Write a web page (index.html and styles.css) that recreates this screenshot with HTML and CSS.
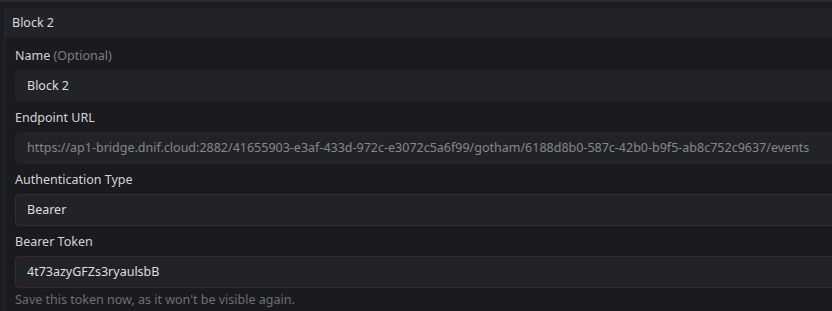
FILE: index.html
```html
<!DOCTYPE html>
<html lang="en">

<head>
    <meta charset="UTF-8">
    <title>Block 2</title>
    <link rel="stylesheet" href="styles.css">
</head>

<body>

    <div class="topstrip"></div>

    <section class="panel">
        <header class="panel-head">Block 2</header>

        <div class="panel-body">
            <div class="field">
                <label>Name <span class="muted">(Optional)</span></label>
                <div class="input">Block 2</div>
            </div>

            <div class="field">
                <label>Endpoint URL</label>
                <div class="input disabled">https://ap1-bridge.dnif.cloud:2882/41655903-e3af-433d-972c-e3072c5a6f99/gotham/6188d8b0-587c-42b0-b9f5-ab8c752c9637/events</div>
            </div>

            <div class="field">
                <label>Authentication Type</label>
                <div class="input outlined">Bearer</div>
            </div>

            <div class="field">
                <label>Bearer Token</label>
                <div class="input outlined">4t73azyGFZs3ryaulsbB</div>
                <p class="hint">Save this token now, as it won't be visible again.</p>
            </div>
        </div>
    </section>

</body></html>
```

FILE: styles.css
```css
* {
    margin: 0px;
    padding: 0px;
    box-sizing: border-box;
}

body {
    background: #1c1d20;
    font-family: "Noto Sans", "Open Sans", sans-serif;
    font-size: 12.5px;
    color: #d6d6d8;
    overflow: hidden;
}

.topstrip {
    height: 2px;
    background: #2a2b2f;
}

.panel {
    margin: 6px -20px 0 4px;
    border-left: 1px solid #26272b;
    background: #1a1b1e;
}

.panel-head {
    height: 30px;
    line-height: 30px;
    padding-left: 7px;
    background: #222327;
    color: #dcdcde;
}

.panel-body {
    padding: 8px 0 4px 10px;
}

.field {
    margin-bottom: 6px;
}

label {
    display: block;
    height: 20px;
    line-height: 20px;
    margin-bottom: 4px;
    color: #d4d4d6;
}

.muted {
    color: #7d7e83;
}

.input {
    height: 32px;
    line-height: 30px;
    padding-left: 11px;
    border: 1px solid #222327;
    border-radius: 4px;
    background: #222327;
    color: #dedee0;
    white-space: nowrap;
    overflow: hidden;
}

.input.disabled {
    color: #86878b;
}

.input.outlined {
    border-color: #3a2a30;
}

.hint {
    margin-top: 2px;
    line-height: 19px;
    color: #6e6f74;
}
```
